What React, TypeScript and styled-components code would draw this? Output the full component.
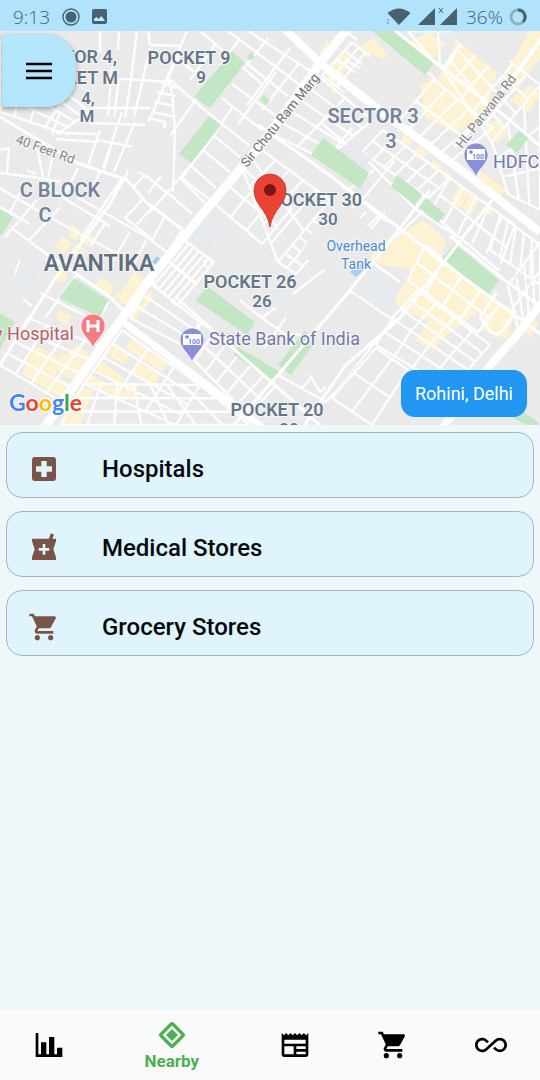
import React from "react";
import styled, { createGlobalStyle } from "styled-components";
import {
  MdAllInclusive,
  MdLocalHospital,
  MdLocalPharmacy,
  MdShoppingCart,
} from "react-icons/md";

const GlobalStyle = createGlobalStyle`
  * { box-sizing: border-box; }
  body {
    margin: 0;
    background: #f0f7fb;
    font-family: Roboto, "Liberation Sans", sans-serif;
  }
  button { font: inherit; border: 0; padding: 0; cursor: pointer; }
`;

const Screen = styled.div`
  display: flex;
  flex-direction: column;
  min-height: 100vh;
`;

const StatusBar = styled.header`
  display: flex;
  align-items: center;
  justify-content: space-between;
  height: 31px;
  padding: 2px 13px 0;
  background: #b1e3fd;
  color: #48626f;
  font: 300 19px/28px "Open Sans", "Noto Sans", sans-serif;
`;

const StatusGroup = styled.div<{ $gap: number }>`
  display: flex;
  align-items: center;
  gap: ${(p) => p.$gap}px;
`;

const MapArea = styled.section`
  position: relative;
  aspect-ratio: 540 / 394;
  overflow: hidden;
`;

const MapCanvas = styled.svg`
  display: block;
  width: 100%;
  height: 100%;
  font-family: Roboto, "Liberation Sans", sans-serif;
`;

const MenuButton = styled.button`
  position: absolute;
  top: 3px;
  left: 2px;
  display: grid;
  place-items: center;
  width: 74px;
  height: 73px;
  border-radius: 0 30px 30px 0;
  background: #b3e5fc;
  box-shadow: 0 2px 5px rgba(0, 0, 0, 0.35);
`;

const PlaceChip = styled.button`
  position: absolute;
  right: 13px;
  bottom: 8px;
  height: 47px;
  padding: 0 14px;
  border-radius: 14px;
  background: #2196f3;
  color: #fff;
  font-size: 18px;
  line-height: 24px;
`;

const CategoryList = styled.main`
  display: flex;
  flex: 1;
  flex-direction: column;
  gap: 13px;
  padding: 7px 6px;
`;

const CategoryCard = styled.button`
  display: flex;
  align-items: center;
  gap: 42px;
  height: 66px;
  padding: 8px 21px 0;
  border: 1px solid #a3b5bf;
  border-radius: 16px;
  background: #e0f4fe;
  color: #05090b;
  font-size: 24px;
  font-weight: 500;
  line-height: 32px;
  text-align: left;

  svg { color: #795548; }
`;

const BottomBar = styled.nav`
  display: flex;
  height: 70px;
  background: #fafafa;
`;

const Tab = styled.button<{ $active?: boolean }>`
  display: flex;
  flex: ${(p) => (p.$active ? 3 : 2)} 0 0;
  flex-direction: column;
  align-items: center;
  justify-content: center;
  background: none;
  color: ${(p) => (p.$active ? "#4caf50" : "#000")};
  font-size: 17px;
  font-weight: 700;
  line-height: 20px;
`;

type Pt = [number, number];
type Block = [Pt, Pt, Pt, Pt, number, number];

// Each block of streets: four corners, then its divisions along both sides.
const blocks: Block[] = [
  [[0, 40], [90, 112], [60, 132], [0, 112], 4, 4],
  [[242, 168], [262, 150], [330, 200], [278, 262], 2, 5],
  [[215, 204], [242, 168], [292, 208], [262, 244], 2, 3],
  [[278, 262], [320, 212], [338, 226], [296, 274], 6, 2],
  [[270, 133], [318, 76], [372, 120], [325, 160], 5, 2],
  [[322, 76], [352, 42], [372, 58], [344, 92], 4, 3],
  [[442, 68], [472, 31], [540, 85], [492, 142], 4, 5],
  [[408, 31], [468, 31], [446, 68], [434, 62], 2, 1],
  [[434, 80], [493, 128], [452, 160], [398, 122], 5, 2],
  [[383, 130], [450, 178], [428, 198], [362, 152], 6, 2],
  [[450, 178], [515, 225], [498, 270], [430, 212], 5, 2],
  [[492, 142], [540, 85], [540, 210], [508, 194], 3, 3],
  [[500, 215], [540, 245], [540, 285], [490, 250], 5, 1],
  [[425, 245], [500, 304], [478, 332], [408, 280], 4, 2],
  [[508, 285], [540, 242], [540, 300], [518, 330], 4, 2],
  [[418, 290], [490, 345], [468, 370], [392, 318], 4, 3],
  [[392, 318], [468, 370], [450, 390], [376, 345], 4, 2],
  [[350, 291], [393, 320], [326, 402], [278, 375], 2, 2],
  [[376, 348], [408, 370], [372, 425], [332, 398], 2, 2],
  [[150, 280], [184, 240], [214, 262], [177, 306], 2, 6],
  [[130, 318], [150, 283], [200, 322], [184, 346], 3, 1],
  [[184, 350], [202, 322], [276, 386], [248, 415], 2, 6],
  [[285, 334], [318, 336], [352, 366], [320, 392], 2, 3],
  [[122, 330], [200, 385], [176, 425], [84, 384], 3, 4],
  [[84, 384], [200, 385], [250, 425], [60, 425], 7, 3],
  [[28, 318], [104, 348], [62, 402], [0, 365], 4, 4],
];

// Streets that follow no grid.
const streets = [
  "M100,31V52M119,31L118,50M137,31L131,80 125,118M112,68L108,116M148,31L150,45 182,46M150,48L134,117M119,79L114,117",
  "M108,78L172,82M90,108H150M90,123L146,125M187,31L168,76 150,119M178,56L168,78 172,92 175,130 173,192",
  "M160,82L177,88M157,92L176,96M155,102L175,106M152,112L176,117M148,118L165,122 162,144",
  "M150,119L125,178M135,122L114,172M122,112L103,168M112,142L104,170M100,130L88,165M60,112L52,135M56,133L100,134M56,139L98,142",
  "M97,140L134,147M37,147L43,177M0,150L9,148 7,173M0,173L33,177 60,182M27,170L36,174M52,158L48,180",
  "M37,200L5,237M60,207L28,242M123,177L80,240M100,170L90,197M23,187L10,212M78,168L66,192",
  "M0,188L40,212 123,257M12,228L45,253M77,197L147,237 173,257M0,207L30,224M50,190L110,226",
  "M142,200L125,218 153,240M152,208L137,224M166,215L152,240M183,228L165,258M133,170L145,175 167,193M162,175L148,193M145,175L133,187M106,222L90,246M130,232L112,262M146,240L132,268",
  "M240,38L190,108 167,140M232,108L205,148 167,193 150,212M213,135L240,157M203,150L230,172M190,165L216,188M180,178L205,203M168,193L192,214M196,158L182,178 210,200",
  "M168,78L207,112 250,146M222,98L262,130M232,84L276,116M245,62L288,96M228,31L300,85M248,31L312,72M200,31L262,84M290,48L247,105M268,38L246,66M215,45L190,80M276,72L238,124M300,62L262,110M180,60L196,74",
  "M40,293L98,322M98,322L108,302M76,276L45,318M20,260L10,290M0,288L20,296 32,306",
  "M345,31L357,40M345,60L360,68M398,42L436,80M320,122L372,165 415,209 470,245M352,128L334,150M395,160L362,200M376,168L348,190M362,196L330,236M385,212L360,242M342,186L388,222M352,226L366,212 M362,232L378,216",
  "M262,318L300,345 340,375M286,318L264,348M240,300L262,318 350,250M395,238L424,210M392,240L372,262 400,282",
];

const streetPath =
  streets.join("") +
  blocks
    .map(([a, b, c, d, nu, nv]) => {
      const mix = (p: Pt, q: Pt, t: number) =>
        `${Math.round((p[0] + (q[0] - p[0]) * t) * 10) / 10},${Math.round((p[1] + (q[1] - p[1]) * t) * 10) / 10}`;
      const lines: string[] = [];
      for (let i = 0; i <= nu; i++) lines.push(`M${mix(a, b, i / nu)}L${mix(d, c, i / nu)}`);
      for (let j = 0; j <= nv; j++) lines.push(`M${mix(a, d, j / nv)}L${mix(b, c, j / nv)}`);
      return lines.join("");
    })
    .join("");

const parks = [
  "232,51 245,63 210,108 194,97", "247,57 251,52 255,57 250,61", "260,99 264,95 270,100 266,106",
  "209,116 221,125 191,163 179,154", "372,31 393,31 434,63 425,75", "323,138 369,173 360,189 311,155",
  "397,175 422,194 415,205 391,187", "425,197 445,214 438,223 417,206", "520,130 529,138 517,153 506,145",
  "455,244 499,280 488,296 442,258", "305,330 313,345 291,375 278,365", "238,347 280,372 273,382 234,355",
  "208,287 255,322 247,335 195,300", "74,278 108,300 100,317 59,298", "0,313 15,322 3,343 0,350",
  "0,209 13,217 3,233 0,236", "518,408 538,422 538,425 527,425 513,418",
];

const builtUp = [
  "325,70 346,48 350,58 334,96", "358,48 374,38 388,56 374,66", "408,42 428,32 445,44 434,58",
  "322,47 328,40 330,51 320,56", "442,72 460,33 500,60 486,112 456,134 420,112", "420,85 434,78 448,88 470,104 450,130 426,118",
  "540,31 540,58 515,92 500,82 530,31", "510,100 530,85 540,95 528,112", "484,128 500,116 508,132 498,144",
  "404,135 412,140 408,148 400,142", "419,146 428,153 421,161 412,153", "434,160 442,166 438,173 430,167",
  "446,170 453,175 449,181 442,176", "480,170 506,190 500,198 474,178", "459,184 470,192 460,208 450,202",
  "470,193 480,200 471,215 462,208", "486,204 495,209 490,216 484,211",
  "385,242 424,220 446,240 440,258 492,297 514,310 508,340 480,330 486,306 440,340 434,352 415,340 430,320 400,310 395,298 412,270 368,262 378,246",
  "528,312 538,324 530,338 524,330", "72,225 81,230 76,241 68,236", "62,237 72,243 64,253 54,247",
  "86,230 94,236 87,245 80,240", "74,244 86,250 80,258 70,256", "55,275 64,268 68,278 60,283",
  "100,277 114,286 109,297 95,288", "122,290 135,270 146,280 125,305 112,296", "144,297 153,289 150,302 142,312",
  "130,315 136,301 144,305 135,320", "60,310 72,316 67,326 56,318", "34,345 60,358 56,376 28,360",
  "28,360 70,384 64,400 22,374", "76,345 90,354 82,365 66,355", "110,342 130,354 125,366 104,352",
  "132,338 168,364 162,372 126,348", "100,360 124,378 120,388 95,368", "92,375 124,392 120,402 86,382",
  "138,362 160,374 154,386 132,372", "128,382 138,385 132,400 122,396", "68,396 82,388 94,390 80,425 62,425", "60,352 90,370 82,384 56,370",
];

const mainRoads: [string, number][] = [
  ["M44,428 L110,335 153,275 200,217 267,137 320,63 348,28", 9],
  ["M284,28 L320,63 383,113 420,140 470,177 540,232", 8],
  ["M123,322 L167,355 207,385 262,427", 7],
  ["M443,427 L493,362 517,335 542,302", 8],
  ["M455,147 L515,75 542,38", 4],
  ["M0,117 L77,163 127,180 147,203 182,229", 3],
  ["M258,125 L313,163 358,197 415,240 442,262 500,304 540,334", 3],
  ["M393,29 L436,63 500,112 540,146", 3],
  ["M303,427 L345,366 400,318 450,254 492,200", 3],
  ["M232,427 L278,375 350,290 390,241 430,190", 3],
  ["M124,178 L110,204 54,280 0,365", 3],
  ["M45,253 L75,273 110,297 123,310", 3],
  ["M164,258 L196,283 M177,298 L236,351 276,386 322,427", 3],
  ["M450,236 L502,278 540,306", 3],
];

interface LabelProps {
  x: number;
  y: number;
  size: number;
  children: string;
  color?: string;
  weight?: number;
  anchor?: "start" | "middle" | "end";
  turn?: number;
}

const MapLabel = ({ x, y, size, children, color = "#66768a", weight = 600, anchor = "middle", turn }: LabelProps) => (
  <text
    x={x}
    y={y}
    fontSize={size}
    fontWeight={weight}
    fill={color}
    textAnchor={anchor}
    stroke="#f6f6f6"
    strokeWidth={2}
    paintOrder="stroke"
    transform={turn ? `rotate(${turn} ${x} ${y})` : undefined}
  >
    {children}
  </text>
);

const PoiPin = ({ x, y, color, children }: { x: number; y: number; color: string; children: React.ReactNode }) => (
  <g transform={`translate(${x} ${y})`}>
    <path d="M0 22 C-2 14 -12 9 -12 0 A12 12 0 0 1 12 0 C12 9 2 14 0 22Z" fill={color} stroke="#fff" strokeWidth="0.6" />
    {children}
  </g>
);

const BankPin = ({ x, y }: { x: number; y: number }) => (
  <PoiPin x={x} y={y} color="#8790d8">
    <rect x="-9" y="-6" width="18" height="11" fill="#fff" />
    <circle cx="-5" cy="-3" r="1.8" fill="#7986d5" />
    <text x="2" y="4" fontSize="7" fontWeight="700" textAnchor="middle" fill="#7986d5">100</text>
  </PoiPin>
);

const CityMap = () => (
  <MapCanvas viewBox="0 31 540 394" preserveAspectRatio="xMidYMid slice" role="img" aria-label="Map of Rohini, Delhi">
    <rect y="31" width="540" height="394" fill="#eaeaea" />
    {builtUp.map((p) => <polygon key={p} points={p} fill="#fdf3d2" />)}
    <path d={streetPath} stroke="#fdfdfd" strokeWidth="2.400" fill="none" strokeLinejoin="round" />
    <g fill="#eaeaea">
      <path d="M340,89 L372,54 418,82 392,112 383,110Z M452,31 L526,31 502,76 460,43Z M131,148 L148,121 170,131 169,180 150,172 128,172Z M325,212 L348,205 382,241 338,278 300,255Z M354,294 L390,321 334,393 292,362Z M450,228 L490,256 540,292 500,268Z M0,262 L30,286 18,308 0,300Z M0,372 L24,386 8,410 0,405Z" />
    </g>
    <g fill="#e6e9ed">
      <path d="M203,219 L220,232 208,252 190,240Z M348,143 L372,158 364,168 342,152Z M20,262 L40,268 30,288 14,280Z M372,274 L402,284 388,306 356,290Z M275,290 L302,296 290,314 268,304Z" />
    </g>
    {parks.map((p) => <polygon key={p} points={p} fill="#c3e7c4" />)}
    <path d="M350,272 l10,-8 6,4 -10,9Z M152,262 l5,-6 4,4 -5,5Z" fill="#a5cff5" />
    <g fill="none" stroke="#fff" strokeLinejoin="round">
      {mainRoads.map(([d, width]) => <path key={d} d={d} strokeWidth={width} />)}
      <path d="M480,317 L497,292 M480,317 L491,332 Q498,337 503,330 L516,311" strokeWidth="3" />
      <circle cx="208" cy="263" r="4" strokeWidth="2" />
    </g>

    <MapLabel x={117} y={63} size={18} anchor="end">SECTOR 4,</MapLabel>
    <MapLabel x={118} y={84} size={18} anchor="end">POCKET M</MapLabel>
    <MapLabel x={88} y={104} size={17}>4,</MapLabel>
    <MapLabel x={87} y={122} size={17}>M</MapLabel>
    <MapLabel x={189} y={64} size={18}>POCKET 9</MapLabel>
    <MapLabel x={201} y={83} size={17}>9</MapLabel>
    <MapLabel x={373} y={123} size={20} color="#74849c">SECTOR 3</MapLabel>
    <MapLabel x={391} y={148} size={20} color="#74849c">3</MapLabel>
    <MapLabel x={60} y={197} size={20} color="#74849c">C BLOCK</MapLabel>
    <MapLabel x={45} y={222} size={20} color="#74849c">C</MapLabel>
    <MapLabel x={99} y={271} size={23} color="#607080">AVANTIKA</MapLabel>
    <MapLabel x={362} y={206} size={18} anchor="end">POCKET 30</MapLabel>
    <MapLabel x={328} y={225} size={17}>30</MapLabel>
    <MapLabel x={250} y={288} size={18}>POCKET 26</MapLabel>
    <MapLabel x={262} y={307} size={17}>26</MapLabel>
    <MapLabel x={277} y={416} size={18}>POCKET 20</MapLabel>
    <MapLabel x={289} y={435} size={17}>20</MapLabel>
    <MapLabel x={15} y={143} size={13} weight={400} color="#858585" anchor="start" turn={20}>40 Feet Rd</MapLabel>
    <MapLabel x={247} y={168} size={13} weight={400} color="#6e6e6e" anchor="start" turn={-51}>Sir Chotu Ram Marg</MapLabel>
    <MapLabel x={462} y={149} size={13} weight={400} color="#858585" anchor="start" turn={-52}>HL Parwana Rd</MapLabel>
    <MapLabel x={356} y={251} size={14} weight={400} color="#4a8bd0">Overhead</MapLabel>
    <MapLabel x={356} y={269} size={14} weight={400} color="#4a8bd0">Tank</MapLabel>
    <MapLabel x={493} y={168} size={18} weight={400} color="#7078a8" anchor="start">HDFC</MapLabel>
    <MapLabel x={209} y={345} size={18} weight={400} color="#7078a8" anchor="start">State Bank of India</MapLabel>
    <MapLabel x={74} y={340} size={18} weight={400} color="#b45f68" anchor="end">y Hospital</MapLabel>

    <BankPin x={476} y={155} />
    <BankPin x={192} y={340} />
    <PoiPin x={93} y={326} color="#f57c80">
      <path d="M-5 -6 V6 M5 -6 V6 M-5 0 H5" stroke="#fff" strokeWidth="3" />
    </PoiPin>

    <path d="M270 227 C267 209 254 205 254 190 A16 16 0 0 1 286 190 C286 205 273 209 270 227Z" fill="#ea4335" stroke="#c5352a" strokeWidth="0.8" />
    <circle cx="270" cy="190" r="6" fill="#811411" />

    <text x="9" y="411" fontFamily="Lato, sans-serif" fontSize="23" fontWeight="700" stroke="#fff" strokeWidth="2" paintOrder="stroke">
      <tspan fill="#4285f4">G</tspan><tspan fill="#ea4335">o</tspan><tspan fill="#fbbc05">o</tspan>
      <tspan fill="#4285f4">g</tspan><tspan fill="#34a853">l</tspan><tspan fill="#ea4335">e</tspan>
    </text>
  </MapCanvas>
);

const Glyph = ({ d }: { d: string }) => (
  <svg width="32" height="32" viewBox="0 0 24 24" fill="currentColor" aria-hidden="true">
    <path fillRule="evenodd" d={d} />
  </svg>
);

const chartBar = "M22,21H2V3H4V19H6V10H10V19H12V6H16V19H18V14H22V21Z";
const nearby =
  "M12 2.2Q12.8 2.2 13.4 2.8L21.2 10.6Q22.6 12 21.2 13.4L13.4 21.2Q12 22.6 10.6 21.2L2.8 13.4Q1.4 12 2.8 10.6L10.6 2.8Q11.2 2.2 12 2.2ZM12 5L5 12L12 19L19 12ZM12 7.5L16.5 12L12 16.5L7.5 12Z";
const newspaper =
  "M20,11H4V8H20M20,15H13V13H20M20,19H13V17H20M11,19H4V13H11M20.33,4.67L18.67,3L17,4.67L15.33,3L13.67,4.67L12,3L10.33,4.67L8.67,3L7,4.67L5.33,3L3.67,4.67L2,3V19A2,2 0 0,0 4,21H20A2,2 0 0,0 22,19V3L20.33,4.67Z";

const App = () => (
  <>
    <GlobalStyle />
    <Screen>
      <StatusBar>
        <StatusGroup $gap={12}>
          <span>9:13</span>
          <svg width="18" height="18" viewBox="0 0 18 18" aria-hidden="true">
            <circle cx="9" cy="9" r="8" fill="none" stroke="currentColor" strokeWidth="1.4" />
            <circle cx="9" cy="9" r="5.5" fill="currentColor" />
          </svg>
          <svg width="16" height="16" viewBox="0 0 16 16" aria-hidden="true">
            <rect width="15" height="15" rx="2" fill="currentColor" />
            <path d="M2 12 V10 L4.500 8 6.500 10 9.500 7 13 12Z" fill="#c6e9fb" />
          </svg>
        </StatusGroup>
        <StatusGroup $gap={8}>
          <svg width="72" height="20" viewBox="0 0 72 20" fill="currentColor" aria-hidden="true">
            <path d="M13 18 L1.500 6 Q13 -3 24.500 6Z M49 1 V18 H32Z M71 1 V18 H54Z" />
            <path d="M2 12 v1.500 M2 15 v1.500 M53 1 l4 5 M57 1 l-4 5" stroke="currentColor" strokeWidth="1" />
          </svg>
          <StatusGroup $gap={6}>
            <span>36%</span>
            <svg width="18" height="18" viewBox="0 0 18 18" fill="none" strokeWidth="3" aria-hidden="true">
              <circle cx="9" cy="9" r="7" stroke="#8fb2c3" />
              <path d="M9 2 A7 7 0 0 1 14 14" stroke="currentColor" />
            </svg>
          </StatusGroup>
        </StatusGroup>
      </StatusBar>

      <MapArea>
        <CityMap />
        <MenuButton aria-label="Open menu">
          <svg width="36" height="36" viewBox="0 0 36 36" aria-hidden="true">
            <path d="M5 11 H31 M5 18 H31 M5 25 H31" stroke="#000" strokeWidth="2.400" />
          </svg>
        </MenuButton>
        <PlaceChip>Rohini, Delhi</PlaceChip>
      </MapArea>

      <CategoryList>
        <CategoryCard><MdLocalHospital size={32} />Hospitals</CategoryCard>
        <CategoryCard><MdLocalPharmacy size={32} />Medical Stores</CategoryCard>
        <CategoryCard><MdShoppingCart size={32} />Grocery Stores</CategoryCard>
      </CategoryList>

      <BottomBar>
        <Tab aria-label="Statistics"><Glyph d={chartBar} /></Tab>
        <Tab $active><Glyph d={nearby} />Nearby</Tab>
        <Tab aria-label="News"><Glyph d={newspaper} /></Tab>
        <Tab aria-label="Shop"><MdShoppingCart size={32} /></Tab>
        <Tab aria-label="More"><MdAllInclusive size={32} /></Tab>
      </BottomBar>
    </Screen>
  </>
);

export default App;
